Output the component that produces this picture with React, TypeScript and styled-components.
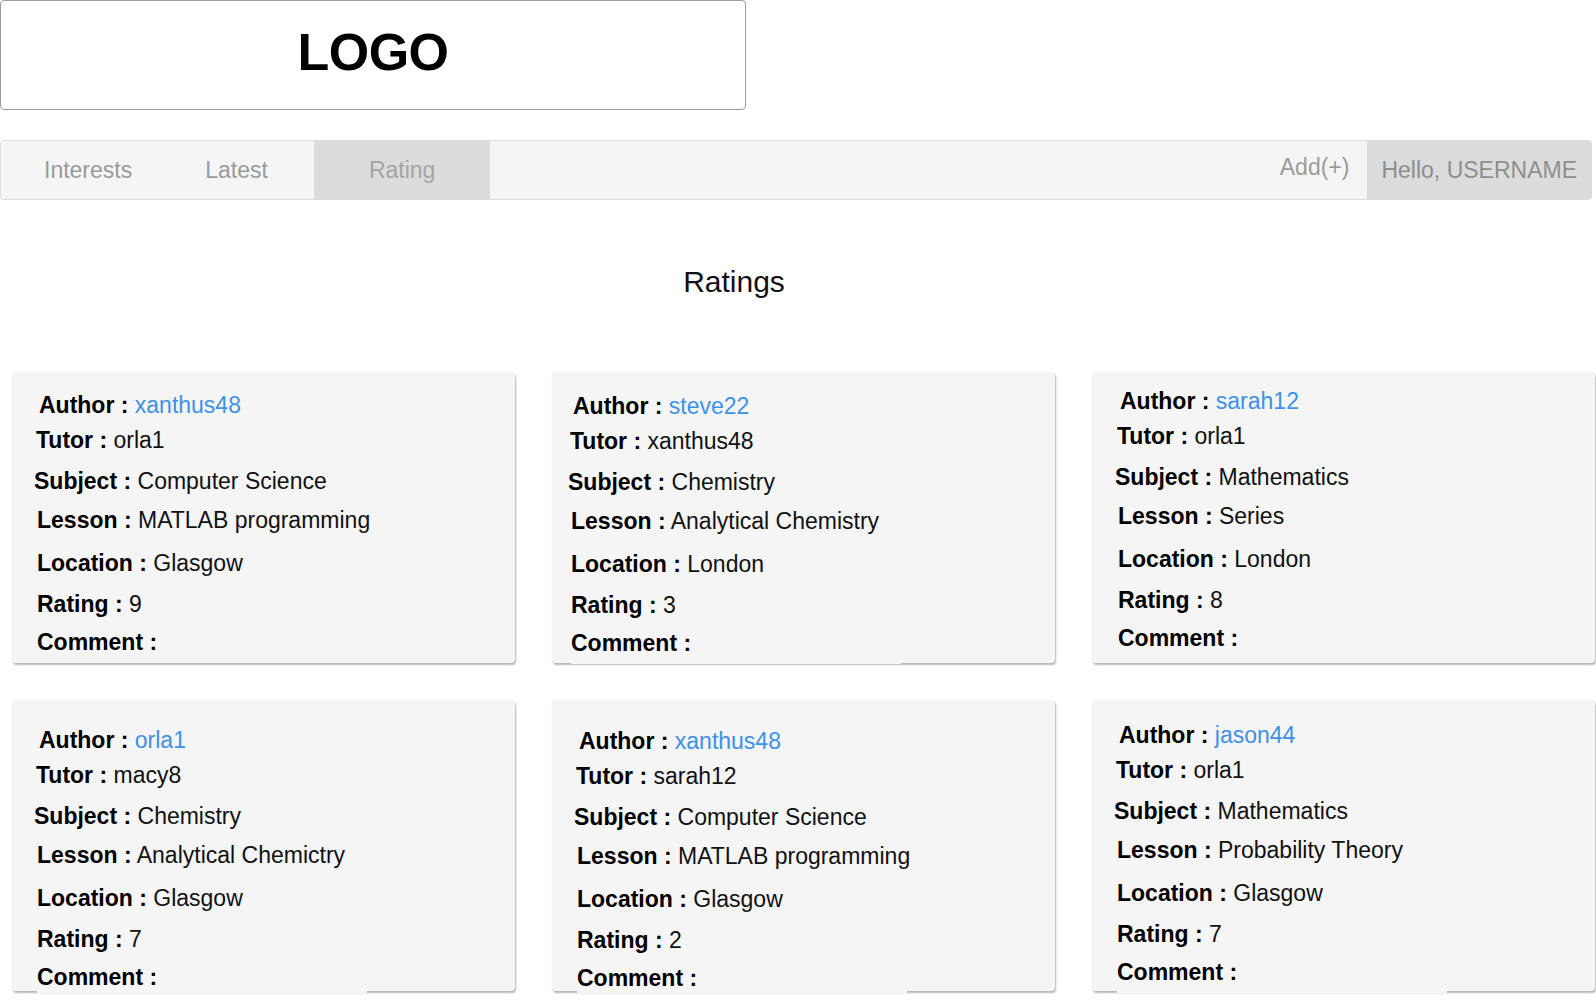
import React from 'react';
import styled, { createGlobalStyle } from 'styled-components';

const GlobalStyle = createGlobalStyle`
  body {
    margin: 0;
    background: #ffffff;
    font-family: "Liberation Sans", Arial, Helvetica, sans-serif;
  }
`;

const Page = styled.div`
  width: 1596px;
  display: flex;
  flex-direction: column;
`;

const LogoBox = styled.div`
  width: 746px;
  height: 110px;
  border: 1px solid #9c9c9c;
  border-radius: 4px;
  display: flex;
  justify-content: center;
  padding-top: 23px;
  box-sizing: border-box;
`;

const LogoText = styled.span`
  font-size: 52px;
  line-height: 56px;
  font-weight: 700;
  color: #000;
  letter-spacing: -0.5px;
`;

const NavBar = styled.nav`
  margin-top: 30px;
  width: 1592px;
  height: 60px;
  box-sizing: border-box;
  background: #f5f5f5;
  border: 1px solid #dedede;
  border-radius: 3px;
  display: flex;
  align-items: stretch;
`;

const NavTab = styled.div<{ $padL: number; $padR: number; $active?: boolean }>`
  display: flex;
  align-items: center;
  padding: 0 ${(p) => p.$padR}px 0 ${(p) => p.$padL}px;
  background: ${(p) => (p.$active ? '#dcdcdc' : 'transparent')};
  color: ${(p) => (p.$active ? '#a5a5a5' : '#9b9b9b')};
  font-size: 23px;
`;

const Spacer = styled.div`
  flex: 1;
`;

const AddLink = styled.div`
  display: flex;
  align-items: center;
  padding: 0 18px 6px 0;
  color: #9b9b9b;
  font-size: 23px;
`;

const Greeting = styled.div`
  display: flex;
  align-items: center;
  padding: 0 14px;
  background: #dcdcdc;
  color: #8e8e8e;
  font-size: 23px;
  border-radius: 0 3px 3px 0;
`;

const Title = styled.h2`
  margin: 64px 0 0;
  padding-right: 128px;
  text-align: center;
  font-size: 30px;
  line-height: 36px;
  font-weight: 400;
  color: #111;
`;

const CardGrid = styled.div`
  margin-top: 72px;
  padding-left: 12px;
  display: grid;
  grid-template-columns: repeat(3, 503px);
  grid-auto-rows: 291px;
  column-gap: 37px;
  row-gap: 37px;
  padding-bottom: 4px;
`;

const Card = styled.div<{ $padX: number; $padTop: number }>`
  background: #f5f5f5;
  border-radius: 4px;
  box-shadow: 0 0 1px rgba(0, 0, 0, 0.1), 1px 2px 2px rgba(0, 0, 0, 0.28);
  padding: ${(p) => p.$padTop}px 0 0 ${(p) => p.$padX}px;
  box-sizing: border-box;
  display: flex;
  flex-direction: column;
`;

const Field = styled.div<{ $shift: number; $gap: number }>`
  margin-top: ${(p) => p.$gap}px;
  margin-left: ${(p) => p.$shift}px;
  font-size: 23px;
  line-height: 26px;
  color: #111;
  white-space: nowrap;
`;

const Label = styled.b`
  font-weight: 700;
  color: #000;
`;

const AuthorName = styled.span`
  color: #3d91e6;
`;

const CommentBox = styled.div`
  width: 330px;
  height: 8px;
  background: #f5f5f5;
  flex-shrink: 0;
`;

type Review = {
  author: string;
  tutor: string;
  subject: string;
  lesson: string;
  location: string;
  rating: number;
  padX: number;
  padTop: number;
};

const reviews: Review[] = [
  { author: 'xanthus48', tutor: 'orla1', subject: 'Computer Science', lesson: 'MATLAB programming', location: 'Glasgow', rating: 9, padX: 25, padTop: 20 },
  { author: 'steve22', tutor: 'xanthus48', subject: 'Chemistry', lesson: 'Analytical Chemistry', location: 'London', rating: 3, padX: 19, padTop: 21 },
  { author: 'sarah12', tutor: 'orla1', subject: 'Mathematics', lesson: 'Series', location: 'London', rating: 8, padX: 26, padTop: 16 },
  { author: 'orla1', tutor: 'macy8', subject: 'Chemistry', lesson: 'Analytical Chemictry', location: 'Glasgow', rating: 7, padX: 25, padTop: 27 },
  { author: 'xanthus48', tutor: 'sarah12', subject: 'Computer Science', lesson: 'MATLAB programming', location: 'Glasgow', rating: 2, padX: 25, padTop: 28 },
  { author: 'jason44', tutor: 'orla1', subject: 'Mathematics', lesson: 'Probability Theory', location: 'Glasgow', rating: 7, padX: 25, padTop: 22 },
];

const RatingCard = ({ r }: { r: Review }) => (
  <Card $padX={r.padX} $padTop={r.padTop}>
    <Field $shift={2} $gap={0}>
      <Label>Author :</Label> <AuthorName>{r.author}</AuthorName>
    </Field>
    <Field $shift={-1} $gap={9}>
      <Label>Tutor :</Label> {r.tutor}
    </Field>
    <Field $shift={-3} $gap={15}>
      <Label>Subject :</Label> {r.subject}
    </Field>
    <Field $shift={0} $gap={13}>
      <Label>Lesson :</Label> {r.lesson}
    </Field>
    <Field $shift={0} $gap={17}>
      <Label>Location :</Label> {r.location}
    </Field>
    <Field $shift={0} $gap={15}>
      <Label>Rating :</Label> {r.rating}
    </Field>
    <Field $shift={0} $gap={12}>
      <Label>Comment :</Label>
    </Field>
    <CommentBox />
  </Card>
);

const App = () => {
  return (
    <Page>
      <GlobalStyle />
      <LogoBox>
        <LogoText>LOGO</LogoText>
      </LogoBox>
      <NavBar>
        <NavTab $padL={43} $padR={45}>Interests</NavTab>
        <NavTab $padL={28} $padR={46}>Latest</NavTab>
        <NavTab $padL={55} $padR={55} $active>Rating</NavTab>
        <Spacer />
        <AddLink>Add(+)</AddLink>
        <Greeting>Hello, USERNAME</Greeting>
      </NavBar>
      <Title>Ratings</Title>
      <CardGrid>
        {reviews.map((r, i) => (
          <RatingCard key={i} r={r} />
        ))}
      </CardGrid>
    </Page>
  );
};

export default App;
